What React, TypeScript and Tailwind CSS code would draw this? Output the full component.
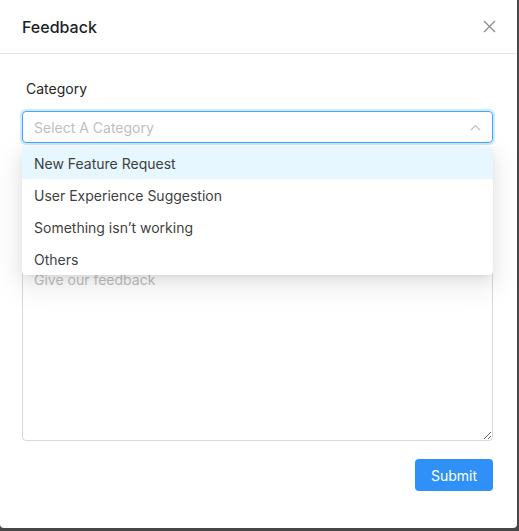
import React from "react";

const options = [
  "New Feature Request",
  "User Experience Suggestion",
  "Something isn\u2019t working",
  "Others",
];

export default function App() {
  return (
    <div className="w-[519px] h-[531px] bg-[#474747] overflow-hidden" style={{ fontFamily: "Inter, 'Noto Sans', sans-serif" }}>
      <div className="w-[517px] h-[528px] bg-white rounded-b-[4px] flex flex-col">
        {/* Header */}
        <div className="h-[54px] shrink-0 border-b border-[#e8e8e8] flex items-center justify-between pl-[22px] pr-[21px]">
          <span className="text-[16px] font-medium text-[#1f1f1f] leading-none">Feedback</span>
          <svg width="13" height="13" viewBox="0 0 13 13" className="text-[#8c8c8c]">
            <path d="M1 1L12 12M12 1L1 12" stroke="currentColor" strokeWidth="1.3" fill="none" />
          </svg>
        </div>

        {/* Body */}
        <div className="pl-[22px] pr-[24px] pt-[24px] flex flex-col">
          <label className="text-[14px] text-[#262626] leading-[22px] pl-[4px]">Category</label>

          <div className="relative mt-[11px]">
            <div className="h-[32px] rounded-[4px] border border-[#40a9ff] shadow-[0_0_0_2px_rgba(24,144,255,0.2)] flex items-center justify-between px-[11px]">
              <span className="text-[14px] text-[#bfbfbf]">Select A Category</span>
              <svg width="11" height="7" viewBox="0 0 11 7" className="text-[#bfbfbf]">
                <path d="M1 6L5.5 1.5L10 6" stroke="currentColor" strokeWidth="1.2" fill="none" />
              </svg>
            </div>

            {/* Dropdown */}
            <div className="absolute left-0 right-0 top-[36px] z-10 bg-white rounded-[4px] shadow-[0_3px_6px_-4px_rgba(0,0,0,0.12),0_6px_16px_0_rgba(0,0,0,0.08),0_9px_28px_8px_rgba(0,0,0,0.05)] overflow-hidden">
              {options.map((o, i) => (
                <div
                  key={o}
                  className={
                    i === 0
                      ? "h-[32px] flex items-center px-[12px] text-[14px] text-[#3f3f3f] bg-[#e6f7ff]"
                      : "h-[32px] flex items-center px-[12px] text-[14px] text-[#3f3f3f]"
                  }
                >
                  {o}
                </div>
              ))}
            </div>
          </div>

          <textarea
            className="mt-[121px] h-[177px] w-full rounded-[4px] border border-[#d9d9d9] px-[11px] py-[4px] text-[14px] leading-[22px] text-[#262626] placeholder:text-[#bfbfbf] outline-none resize-y"
            placeholder="Give our feedback"
          />

          <div className="flex justify-end mt-[18px]">
            <button className="w-[78px] h-[32px] rounded-[4px] bg-[#2f91f7] text-white text-[14px]">Submit</button>
          </div>
        </div>
      </div>
    </div>
  );
}
